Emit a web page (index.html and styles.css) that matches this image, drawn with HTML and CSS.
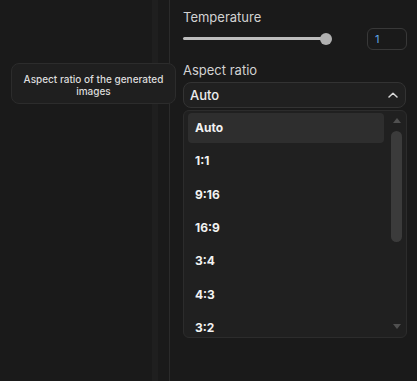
FILE: index.html
```html
<!DOCTYPE html>
<html>
<head>
<meta charset="utf-8">
<link rel="stylesheet" href="styles.css">
</head>
<body>
<div class="app">
  <div class="left">
    <div class="tooltip">Aspect ratio of the generated images</div>
  </div>
  <div class="rail"></div>
  <div class="gutter"></div>
  <div class="divider"></div>
  <div class="panel">
    <div class="label">Temperature</div>
    <div class="slider-row">
      <div class="slider">
        <div class="track"></div>
        <div class="thumb"></div>
      </div>
      <div class="num">1</div>
    </div>
    <div class="label label-ar">Aspect ratio</div>
    <div class="select">
      <span class="select-value">Auto</span>
      <svg class="chev" width="10" height="6" viewBox="0 0 10 6"><path d="M1 5 L5 1.2 L9 5" fill="none" stroke="#d8d8d8" stroke-width="1.5" stroke-linecap="round" stroke-linejoin="round"/></svg>
    </div>
    <div class="dropdown">
      <div class="items">
        <div class="item selected">Auto</div>
        <div class="item">1:1</div>
        <div class="item">9:16</div>
        <div class="item">16:9</div>
        <div class="item">3:4</div>
        <div class="item">4:3</div>
        <div class="item">3:2</div>
      </div>
      <div class="scroll">
        <div class="arrow up"></div>
        <div class="sthumb"></div>
        <div class="strack"></div>
        <div class="arrow down"></div>
      </div>
    </div>
  </div>
</div>
</body>
</html>
```
FILE: styles.css
```css
html, body {
  margin: 0;
  padding: 0;
  background: #1a1a1a;
}
body {
  width: 417px;
  height: 381px;
  overflow: hidden;
  font-family: "Inter", "Liberation Sans", sans-serif;
}
.app {
  display: grid;
  grid-template-columns: 152px 6px 11px 1px 1fr;
  height: 381px;
}
.left {
  position: relative;
  background: #1a1a1a;
}
.rail {
  background: #1f1f1f;
}
.gutter {
  background: #1a1a1a;
}
.divider {
  background: #2b2b2b;
}
.tooltip {
  position: absolute;
  left: 11px;
  top: 63px;
  width: 165px;
  height: 41px;
  box-sizing: border-box;
  z-index: 5;
  background: #1f1f1f;
  border: 1px solid #2c2c2c;
  border-radius: 8px;
  color: #dcdcdc;
  font-size: 10px;
  font-weight: 500;
  line-height: 12px;
  text-align: center;
  padding: 9px 8px 0;
}
.panel {
  background: #1a1a1a;
  padding: 8px 10px 0 13px;
  display: flex;
  flex-direction: column;
}
.label {
  color: #d2d2d2;
  font-size: 13px;
  line-height: 18px;
}
.slider-row {
  display: flex;
  align-items: center;
  height: 22px;
  margin-top: 2px;
}
.slider {
  position: relative;
  width: 149px;
  height: 12px;
}
.track {
  position: absolute;
  left: 0;
  top: 4px;
  width: 143px;
  height: 3px;
  border-radius: 2px;
  background: #bdbdbd;
}
.thumb {
  position: absolute;
  left: 137px;
  top: 0;
  width: 12px;
  height: 12px;
  border-radius: 50%;
  background: #b0b0b0;
}
.num {
  margin-left: auto;
  width: 40px;
  height: 22px;
  box-sizing: border-box;
  border: 1px solid #383838;
  border-radius: 6px;
  color: #5fa6e8;
  font-size: 11px;
  line-height: 20px;
  padding-left: 7px;
}
.label-ar {
  margin-top: 11px;
}
.select {
  margin-top: 3px;
  height: 26px;
  box-sizing: border-box;
  border: 1px solid #333;
  border-radius: 8px;
  background: #202020;
  display: flex;
  align-items: center;
  padding: 0 6px 0 6px;
  margin-right: 1px;
}
.select-value {
  color: #ececec;
  font-size: 13px;
  font-weight: 500;
}
.chev {
  margin-left: auto;
  margin-right: 1px;
}
.dropdown {
  margin-top: 2px;
  height: 228px;
  box-sizing: border-box;
  border: 1px solid #2c2c2c;
  border-radius: 6px;
  background: #202020;
  display: flex;
  padding: 2px 4px 0 4px;
  overflow: hidden;
}
.items {
  flex: 1;
  display: flex;
  flex-direction: column;
  gap: 3.33px;
}
.item {
  flex: none;
  height: 30px;
  line-height: 30px;
  padding-left: 7px;
  border-radius: 4px;
  color: #f2f2f2;
  font-size: 12px;
  font-weight: 700;
}
.item.selected {
  background: #2e2e2e;
}
.scroll {
  width: 11px;
  margin-left: 7px;
  display: flex;
  flex-direction: column;
  align-items: center;
  padding-top: 5px;
}
.arrow {
  width: 0;
  height: 0;
  border-left: 4px solid transparent;
  border-right: 4px solid transparent;
}
.arrow.up {
  border-bottom: 5px solid #505050;
}
.arrow.down {
  border-top: 5px solid #505050;
  margin-bottom: 8px;
}
.sthumb {
  margin-top: 8px;
  width: 11px;
  height: 111px;
  border-radius: 6px;
  background: #3b3b3b;
}
.strack {
  flex: 1;
}
```
